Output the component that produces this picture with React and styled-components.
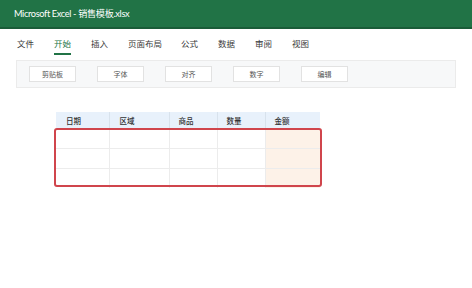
import React from "react";
import styled, { createGlobalStyle } from "styled-components";

const Global = createGlobalStyle`
  html, body { margin: 0; padding: 0; background: #fff; }
  body { font-family: "Lato", "Noto Sans CJK SC", sans-serif; width: 472px; height: 288px; overflow: hidden; }
`;

const Page = styled.div`
  width: 472px;
  height: 288px;
  display: flex;
  flex-direction: column;
`;

const TitleBar = styled.div`
  height: 26px;
  background: #217346;
  border-bottom: 2px solid #1a5c38;
  display: flex;
  align-items: center;
  padding-left: 14px;
  padding-bottom: 1px;
  color: #fff;
  font-size: 9.2px;
  letter-spacing: -0.35px;
  box-sizing: content-box;
`;

const Tabs = styled.div`
  display: flex;
  padding: 9px 0 0 17px;
  height: 24px;
  box-sizing: border-box;
`;

const Tab = styled.div`
  font-size: 8.5px;
  color: ${(p) => (p.$active ? "#217346" : "#3a3a3a")};
  margin-right: ${(p) => p.$mr}px;
  line-height: 12px;
  height: 15px;
  border-bottom: ${(p) => (p.$active ? "2px solid #217346" : "2px solid transparent")};
`;

const Ribbon = styled.div`
  margin: 7px 16px 0 16px;
  height: 28px;
  background: #f7f8f9;
  border: 1px solid #ebebeb;
  box-sizing: border-box;
  display: flex;
  align-items: center;
  padding-left: 12px;
  gap: 21px;
`;

const Group = styled.div`
  width: 47px;
  height: 16px;
  background: #fff;
  border: 1px solid #e2e2e2;
  box-sizing: border-box;
  font-size: 7px;
  color: #555;
  display: flex;
  align-items: center;
  justify-content: center;
`;

const TableWrap = styled.div`
  margin: 24px 0 0 56px;
  position: relative;
  width: 264px;
`;

const Table = styled.table`
  border-collapse: collapse;
  table-layout: fixed;
  width: 264px;
`;

const Th = styled.th`
  height: 16px;
  padding: 0 0 0 ${(p) => p.$pl}px;
  background: #e8f1fb;
  border-left: 1px solid #d8e2ec;
  text-align: left;
  font-size: 7.5px;
  font-weight: 500;
  color: #333;
  &:first-child { border-left: none; }
`;

const Td = styled.td`
  height: 19px;
  padding: 0;
  border-left: 1px solid #ececec;
  border-top: 1px solid #ececec;
  background: ${(p) => (p.$amount ? "#fdf2e8" : "#fff")};
  &:first-child { border-left: none; }
`;

const Highlight = styled.div`
  position: absolute;
  left: -2px;
  top: 16px;
  width: 268px;
  height: 59px;
  border: 2px solid #d0454c;
  border-radius: 3px;
  box-sizing: border-box;
  pointer-events: none;
`;

const tabs = [
  ["文件", 20],
  ["开始", 20, true],
  ["插入", 20],
  ["页面布局", 19],
  ["公式", 20],
  ["数据", 20],
  ["审阅", 20],
  ["视图", 0],
];

const groups = ["剪贴板", "字体", "对齐", "数字", "编辑"];
const cols = [
  ["日期", 53, 10],
  ["区域", 60, 10],
  ["商品", 48, 9],
  ["数量", 48, 9],
  ["金额", 55, 9],
];

export default function App() {
  return (
    <Page>
      <Global />
      <TitleBar>Microsoft Excel - 销售模板.xlsx</TitleBar>
      <Tabs>
        {tabs.map(([t, mr, a]) => (
          <Tab key={t} $mr={mr} $active={a}>
            {t}
          </Tab>
        ))}
      </Tabs>
      <Ribbon>
        {groups.map((g) => (
          <Group key={g}>{g}</Group>
        ))}
      </Ribbon>
      <TableWrap>
        <Table>
          <colgroup>
            {cols.map(([n, w]) => (
              <col key={n} style={{ width: w }} />
            ))}
          </colgroup>
          <thead>
            <tr>
              {cols.map(([n, , pl]) => (
                <Th key={n} $pl={pl}>
                  {n}
                </Th>
              ))}
            </tr>
          </thead>
          <tbody>
            {[0, 1, 2].map((r) => (
              <tr key={r}>
                {cols.map(([n], i) => (
                  <Td key={n} $amount={i === 4} />
                ))}
              </tr>
            ))}
          </tbody>
        </Table>
        <Highlight />
      </TableWrap>
    </Page>
  );
}
